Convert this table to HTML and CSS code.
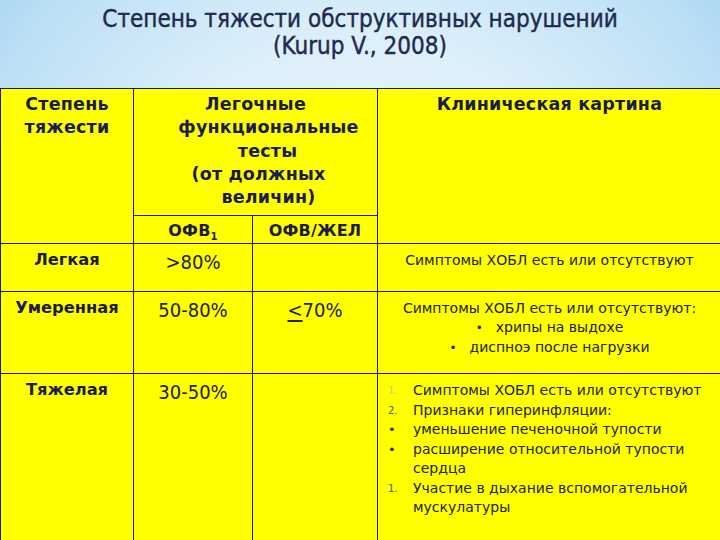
FILE: index.html
```html
<!DOCTYPE html>
<html lang="ru">
<head>
<meta charset="utf-8">
<link rel="stylesheet" href="styles.css">
</head>
<body>
<div class="slide">
  <h1 class="title">Степень тяжести обструктивных нарушений<br>(Kurup V., 2008)</h1>
  <table class="grid">
    <colgroup>
      <col class="c1"><col class="c2"><col class="c3"><col class="c4">
    </colgroup>
    <tr class="h1">
      <th rowspan="2" class="hd">Степень<br>тяжести</th>
      <th colspan="2" class="hd tests">
        <span class="l l1">Легочные</span>
        <span class="l l2">функциональные</span>
        <span class="l l3">тесты</span>
        <span class="l l4">(от должных</span>
        <span class="l l5">величин)</span>
      </th>
      <th rowspan="2" class="hd">Клиническая картина</th>
    </tr>
    <tr class="h2">
      <th class="hd sub">ОФВ<sub>1</sub></th>
      <th class="hd sub">ОФВ/ЖЕЛ</th>
    </tr>
    <tr class="r1">
      <td class="sev">Легкая</td>
      <td class="num">&gt;80%</td>
      <td class="num"></td>
      <td class="clin">Симптомы ХОБЛ есть или отсутствуют</td>
    </tr>
    <tr class="r2">
      <td class="sev">Умеренная</td>
      <td class="num">50-80%</td>
      <td class="num"><span class="le">&lt;</span>70%</td>
      <td class="clin">
        <div>Симптомы ХОБЛ есть или отсутствуют:</div>
        <div class="b b1"><span class="dot">•</span>хрипы на выдохе</div>
        <div class="b b2"><span class="dot">•</span>диспноэ после нагрузки</div>
      </td>
    </tr>
    <tr class="r3">
      <td class="sev">Тяжелая</td>
      <td class="num">30-50%</td>
      <td class="num"></td>
      <td class="clin list">
        <div class="li"><span class="mk pale">1.</span><span>Симптомы ХОБЛ есть или отсутствуют</span></div>
        <div class="li"><span class="mk">2.</span><span>Признаки гиперинфляции:</span></div>
        <div class="li"><span class="mk dotmk">•</span><span>уменьшение печеночной тупости</span></div>
        <div class="li"><span class="mk dotmk">•</span><span>расширение относительной тупости сердца</span></div>
        <div class="li"><span class="mk">1.</span><span>Участие в дыхание вспомогательной мускулатуры</span></div>
      </td>
    </tr>
  </table>
</div>
</body>
</html>
```
FILE: styles.css
```css
html, body {
  margin: 0;
  padding: 0;
  width: 720px;
  height: 540px;
  overflow: hidden;
}
.slide {
  width: 720px;
  height: 540px;
  overflow: hidden;
  background: radial-gradient(ellipse 70% 85% at 50% 45%, #f1f8fc 0%, #dceffa 45%, #bbdff5 80%, #9ccff0 100%);
}
.title {
  margin: 0;
  padding: 6px 0 0 0;
  height: 80px;
  box-sizing: border-box;
  text-align: center;
  font-family: "DejaVu Sans Condensed", "DejaVu Sans", sans-serif;
  font-weight: normal;
  font-size: 24px;
  line-height: 27px;
  color: #1f2a4e;
  -webkit-text-stroke: 0.4px #1f2a4e;
}
.grid {
  margin-top: 8px;
  border-collapse: collapse;
  table-layout: fixed;
  width: 721px;
  background: #ffff00;
}
.c1 { width: 133px; }
.c2 { width: 119px; }
.c3 { width: 125px; }
.c4 { width: 344px; }
.grid th, .grid td {
  border: 1.5px solid #1a1a1a;
  vertical-align: top;
  padding: 0;
  text-align: center;
}
.hd {
  font-family: "DejaVu Sans", sans-serif;
  font-weight: bold;
  font-size: 17.5px;
  line-height: 23.3px;
  color: #1c1c48;
  padding-top: 4px !important;
  letter-spacing: 0.2px;
}
.h1 { height: 127px; }
.h2 { height: 28px; }
.tests .l { display: block; }
.l2 { padding-left: 26px; }
.l3 { padding-left: 24px; }
.l4 { padding-left: 6px; }
.l5 { padding-left: 26px; }
.grid .sub { padding-top: 3px !important; font-size: 16px; }
.sub sub { font-size: 10px; line-height: 0; }
.r1 { height: 48px; }
.r2 { height: 82px; }
.r3 { height: 180px; }
.sev {
  font-family: "DejaVu Sans", sans-serif;
  font-weight: bold;
  font-size: 16.3px;
  line-height: 20px;
  color: #1c1c48;
  padding-top: 6px !important;
}
.num {
  font-family: "DejaVu Sans Condensed", "DejaVu Sans", sans-serif;
  font-size: 20px;
  line-height: 22px;
  color: #222;
  padding-top: 7px !important;
}
.le { text-decoration: underline; text-underline-offset: 3px; }
.clin {
  font-family: "DejaVu Sans", sans-serif;
  font-size: 14px;
  line-height: 19px;
  color: #222;
  padding-top: 7px !important;
}
.b .dot { font-size: 12px; margin-right: 13px; }
.grid td.list {
  text-align: left;
  padding: 7px 10px 0 10px;
}
.li {
  display: flex;
  line-height: 19.5px;
}
.mk {
  flex: 0 0 25px;
  font-size: 10px;
  color: #555;
}
.mk.dotmk { font-size: 13px; color: #333; }
.mk.pale { color: #c9d470; }
```
